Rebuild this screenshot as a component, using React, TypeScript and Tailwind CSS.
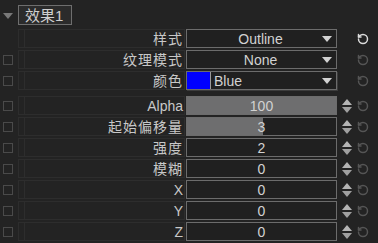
import { RotateCcw } from 'lucide-react';

type Row =
  | { kind: 'select'; label: string; value: string; check: boolean; active?: boolean }
  | { kind: 'color'; label: string; value: string; check: boolean }
  | { kind: 'num'; label: string; value: string; fill: number };

const top: Row[] = [
  { kind: 'select', label: '样式', value: 'Outline', check: false, active: true },
  { kind: 'select', label: '纹理模式', value: 'None', check: true },
  { kind: 'color', label: '颜色', value: 'Blue', check: true },
];

const nums: Row[] = [
  { kind: 'num', label: 'Alpha', value: '100', fill: 1 },
  { kind: 'num', label: '起始偏移量', value: '3', fill: 0.51 },
  { kind: 'num', label: '强度', value: '2', fill: 0 },
  { kind: 'num', label: '模糊', value: '0', fill: 0 },
  { kind: 'num', label: 'X', value: '0', fill: 0 },
  { kind: 'num', label: 'Y', value: '0', fill: 0 },
  { kind: 'num', label: 'Z', value: '0', fill: 0 },
];

function Caret() {
  return (
    <svg width="10" height="6" viewBox="0 0 10 6" className="shrink-0">
      <polygon points="0,0 10,0 5,6" fill="#d2d2d2" />
    </svg>
  );
}

function Spinner() {
  return (
    <svg width="10" height="14" viewBox="0 0 10 14">
      <polygon points="0,6 5,0 10,6" fill="#b4b4b4" />
      <polygon points="0,8 10,8 5,14" fill="#a0a0a0" />
    </svg>
  );
}

function Line({ row }: { row: Row }) {
  const check = row.kind === 'num' ? true : row.check;
  const active = row.kind === 'select' && row.active;
  const cjk = /[^\x00-\x7f]/.test(row.label);
  return (
    <div className="mr-[9px] flex h-[21px] items-center">
      <div className="ml-[3px] w-[10px] shrink-0">
        {check && <div className="h-[10px] w-[10px] border border-[#4a4a4a]" />}
      </div>
      <div className="ml-[5px] flex h-[19px] flex-1 items-center border border-[#2d2d2d]">
        <div className="h-full w-[6px] border-r border-[#2d2d2d]" />
        <span
          className={
            cjk
              ? 'flex-1 pr-[1px] text-right text-[14px] leading-none tracking-[1px] text-[#c8c8c8]'
              : 'flex-1 pr-[1px] text-right text-[14px] leading-none text-[#c8c8c8]'
          }
        >
          {row.label}
        </span>
      </div>
      <div className="ml-[1px] w-[151px] shrink-0">
        {row.kind === 'select' && (
          <div className="flex h-[19px] items-center border border-[#6c6c6c] bg-[#202020] pr-[4px]">
            <span className="flex-1 pl-[12px] text-center text-[14px] leading-none text-[#d2d2d2]">{row.value}</span>
            <Caret />
          </div>
        )}
        {row.kind === 'color' && (
          <div className="flex h-[19px] items-center border border-[#6c6c6c] bg-[#202020] pr-[4px] shadow-[1px_1px_0_#3c3c3c]">
            <div className="h-full w-[24px] border-r border-[#9a9a9a] bg-[#0000ff]" />
            <span className="flex-1 pl-[3px] text-[14px] leading-none text-[#d2d2d2]">{row.value}</span>
            <Caret />
          </div>
        )}
        {row.kind === 'num' && (
          <div className="relative flex h-[19px] items-center justify-center border border-[#6c6c6c] bg-[#202020]">
            <div className="absolute inset-y-0 left-0 bg-[#6e6e6f]" style={{ width: `${row.fill * 100}%` }} />
            <span className="relative text-[14px] leading-none text-[#d2d2d2]">{row.value}</span>
          </div>
        )}
      </div>
      <div className="ml-[5px] flex w-[10px] justify-center">{row.kind === 'num' && <Spinner />}</div>
      <div className="ml-[5px] flex w-[12px] justify-center">
        <RotateCcw size={12} strokeWidth={3} color={active ? '#dcdcdc' : '#555555'} />
      </div>
    </div>
  );
}

export default function App() {
  return (
    <div
      className="h-[243px] w-[378px] overflow-hidden bg-[#232323]"
      style={{ fontFamily: '"Liberation Sans", "Noto Sans CJK SC", sans-serif' }}
    >
      <div className="flex h-[28px] items-start">
        <svg width="10" height="6" viewBox="0 0 10 6" className="ml-[3px] mt-[13px]">
          <polygon points="0,0 10,0 5,6" fill="#787878" />
        </svg>
        <div className="ml-[5px] mt-[5px] flex h-[20px] w-[54px] items-center border border-[#6e6e6e] bg-[#2b2b2b] pl-[6px] text-[15px] leading-none text-[#cfcfcf]">
          效果1
        </div>
      </div>
      {top.map((r) => (
        <Line key={r.label} row={r} />
      ))}
      <div className="h-[4px]" />
      {nums.map((r) => (
        <Line key={r.label} row={r} />
      ))}
    </div>
  );
}
